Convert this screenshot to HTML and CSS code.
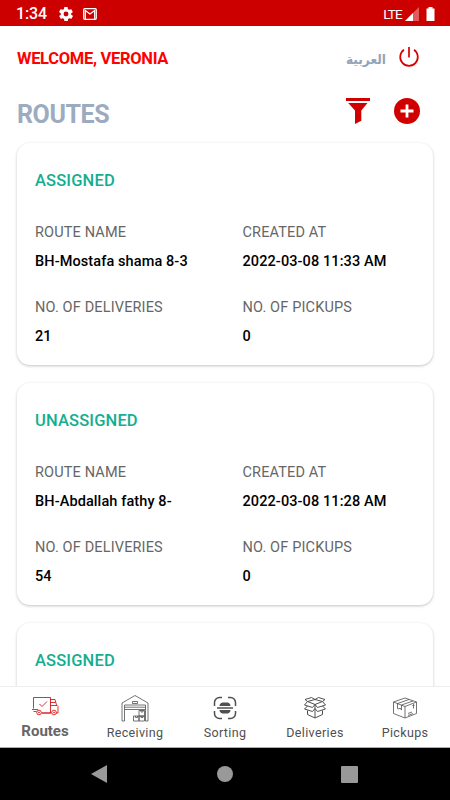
FILE: index.html
```html
<!DOCTYPE html>
<html lang="en">
<head>
    <meta charset="UTF-8">
    <meta name="viewport" content="width=device-width, initial-scale=1.0">
    <title>Routes</title>
    <link rel="stylesheet" href="styles.css">
</head>
<body>
    <div class="status-bar">
        <span class="clock">1:34</span>
        <svg class="status-gear" width="14" height="14" viewBox="2 2 20 20"><path fill="#fff" d="M19.4 13a7.500 7.500 0 0 0 0-2l2.100-1.600a.5.5 0 0 0 .1-.6l-2-3.500a.5.5 0 0 0-.6-.2l-2.500 1a7.300 7.300 0 0 0-1.700-1l-.4-2.600a.5.5 0 0 0-.5-.4h-4a.5.5 0 0 0-.5.4l-.4 2.600a7.300 7.300 0 0 0-1.700 1l-2.500-1a.5.5 0 0 0-.6.2l-2 3.500a.5.5 0 0 0 .1.600L4.600 11a7.500 7.500 0 0 0 0 2l-2.100 1.600a.5.5 0 0 0-.1.600l2 3.500c.1.200.4.300.6.200l2.500-1a7.300 7.300 0 0 0 1.700 1l.4 2.600c0 .2.200.4.500.4h4c.3 0 .5-.2.500-.4l.4-2.600a7.300 7.300 0 0 0 1.700-1l2.500 1c.2.100.5 0 .6-.2l2-3.500a.5.5 0 0 0-.1-.6zM12 15.500a3.500 3.500 0 1 1 0-7 3.500 3.500 0 0 1 0 7z"/></svg>
        <svg width="14" height="12" viewBox="0 0 14 12"><rect x=".7" y=".7" width="12.600" height="10.600" rx="1" fill="none" stroke="#fff" stroke-width="1.200"/><path d="M2.300 11V2.500L7 6l4.700-3.500V11" fill="none" stroke="#fff" stroke-width="1.300"/></svg>
        <span class="lte">LTE</span>
        <svg class="signal" width="14" height="14" viewBox="0 0 14 14"><path d="M14 0v14H0z" fill="#e35c5c"/><path d="M8 6v8H0z" fill="#fff"/></svg>
        <svg width="9" height="14" viewBox="0 0 9 14"><path d="M2.500 0h4v1.500H8.500V14H.5V1.500h2z" fill="#fff"/></svg>
    </div>

    <div class="header">
        <div class="welcome">WELCOME, VERONIA</div>
        <div class="language" lang="ar">العربية</div>
        <svg width="22" height="22" viewBox="0 0 22 22" fill="none" stroke="#d90000" stroke-width="1.700"><path d="M6 3.800a8.800 8.800 0 1 0 10 0M11 1v10.500"/></svg>
    </div>

    <div class="title-row">
        <h1>ROUTES</h1>
        <svg class="filter" width="24" height="26" viewBox="0 0 24 26" fill="#d00000"><path d="M0 0h24v3H0zM2.200 5h19.300L15.300 12.500v10.300L9 26V12.500z"/></svg>
        <svg width="26" height="26" viewBox="0 0 26 26"><circle cx="13" cy="13" r="13" fill="#d00000"/><path d="M13 6.500v13M6.500 13h13" stroke="#fff" stroke-width="2.800"/></svg>
    </div>

    <div class="route-list">
        <div class="card">
            <h2>ASSIGNED</h2>
            <dl>
                <div><dt>ROUTE NAME</dt><dd>BH-Mostafa shama 8-3</dd></div>
                <div><dt>CREATED AT</dt><dd>2022-03-08 11:33 AM</dd></div>
                <div><dt>NO. OF DELIVERIES</dt><dd>21</dd></div>
                <div><dt>NO. OF PICKUPS</dt><dd>0</dd></div>
            </dl>
        </div>
        <div class="card">
            <h2>UNASSIGNED</h2>
            <dl>
                <div><dt>ROUTE NAME</dt><dd>BH-Abdallah fathy 8-</dd></div>
                <div><dt>CREATED AT</dt><dd>2022-03-08 11:28 AM</dd></div>
                <div><dt>NO. OF DELIVERIES</dt><dd>54</dd></div>
                <div><dt>NO. OF PICKUPS</dt><dd>0</dd></div>
            </dl>
        </div>
        <div class="card">
            <h2>ASSIGNED</h2>
        </div>
    </div>

    <div class="tabs">
        <a class="tab active">
            <svg width="28" height="28" viewBox="0 2 28 28"><path d="M2.500 15.500v-11h17v15.500H11M19.500 6.500h4.500l1.500 5.500 1.500 1.500v6.500h-2M19.500 9.500h5M19.500 12.500h6.500M1 16.500h6M2.500 18.500h3M10.500 20h10M8.500 11l2.500 2.500 5-5"/><circle cx="8" cy="19.500" r="2.300"/><circle cx="23" cy="19.500" r="2.300"/><circle cx="8" cy="19.500" r=".5"/><circle cx="23" cy="19.500" r=".5"/></svg>
            <span>Routes</span>
        </a>
        <a class="tab">
            <svg width="28" height="28" viewBox="0 2 28 28"><path d="M1 28V10L14 2.500l13 7.500v18h-2.500V12h-21v16zM3.500 14.200h21M3.500 16.500h21M11.500 8.500h5v2h-5zM18 17.500h5.500V23H18zM12.500 23h5.500v5h-5.500zM18 23h5.500v5H18zM20 17.500v1.500h2v-1.500M14.500 23v1.500h2V23M20 23v1.500h2V23"/></svg>
            <span>Receiving</span>
        </a>
        <a class="tab">
            <svg class="scan" width="28" height="28" viewBox="0 1 28 28"><path d="M3.500 12V8.500a5 5 0 0 1 5-5H11M17 3.500h2.500a5 5 0 0 1 5 5V12M24.500 17v2.500a5 5 0 0 1-5 5H17M11 24.500H8.500a5 5 0 0 1-5-5V17"/><path class="solid" d="M8.500 12c0-2 1-3 3-3.500h5c2 .5 3 1.500 3 3.500zM8.500 16h11c0 2-1 3-3 3.500h-5c-2-.5-3-1.500-3-3.500zM6 13.200h16v1.600H6z"/></svg>
            <span>Sorting</span>
        </a>
        <a class="tab">
            <svg class="open-box" width="28" height="28" viewBox="0 1.500 28 28"><path d="M14 11 6.500 8 3.500 11.500l8 2.500L14 11l2.500 3 8-2.500L21.500 8zM6.500 8 14 6l7.500 2M6.500 8l-2.500-2 6.500-2L14 6l3.500-2L24 6l-2.500 2M6.500 17v4l7.500 3.500 7.500-3.500v-4M14 11v13.500M6.500 12.500l-3 3 8 2.500 2.500-3 2.500 3 8-2.500-3-3"/></svg>
            <span>Deliveries</span>
        </a>
        <a class="tab">
            <svg width="28" height="28" viewBox="0 1.500 28 28"><path d="M2.500 8.500 14 4.500l11.500 4V20L14 24.500 2.500 20zM2.500 8.500 14 13l11.500-4.500M14 13v11.500M6.500 10 18 6M10.500 11.500 22 7.500M6.500 10v5l1.500.5 1-1 1.500 2v-5M22.500 15v-4l-1 1.500M22.500 11l1 .8M17 20l4-1.500M17 22l5-2"/></svg>
            <span>Pickups</span>
        </a>
    </div>

    <div class="system-nav">
        <svg width="17" height="18" viewBox="0 0 17 18"><path d="M16 0v18L0 9z"/></svg>
        <svg width="16" height="16" viewBox="0 0 16 16"><circle cx="8" cy="8" r="8"/></svg>
        <svg width="17" height="17" viewBox="0 0 17 17"><rect width="17" height="17" rx="1"/></svg>
    </div>
</body>
</html>
```
FILE: styles.css
```css
* {
    box-sizing: border-box;
}
body {
    margin: 0;
    height: 800px;
    display: flex;
    flex-direction: column;
    overflow: hidden;
    background-color: #fff;
    font-family: Roboto, sans-serif;
    white-space: nowrap;
}
svg {
    display: block;
    flex: none;
}
.status-bar {
    height: 26px;
    flex: none;
    display: flex;
    align-items: center;
    padding: 1px 15px 0 16px;
    background-color: #cd0000;
    color: #fff;
}
.clock {
    width: 43px;
    font-size: 16px;
    font-weight: 500;
    letter-spacing: -0.1px;
}
.status-gear {
    margin-right: 10px;
}
.lte {
    margin-left: auto;
    font-size: 13.5px;
    letter-spacing: -0.8px;
}
.signal {
    margin: 0 7px 0 3px;
}
.header {
    height: 62px;
    flex: none;
    display: flex;
    align-items: center;
    padding: 0 30px 0 17px;
}
.welcome {
    margin-top: 3px;
    color: #ff0000;
    font-size: 16.5px;
    font-weight: 700;
    letter-spacing: -0.3px;
}
.language {
    margin: 4px 12px 0 auto;
    color: #94a3b8;
    font-family: "DejaVu Sans Condensed", "DejaVu Sans", sans-serif;
    font-size: 13.5px;
    font-stretch: condensed;
    font-weight: 700;
}
.title-row {
    height: 46px;
    flex: none;
    display: flex;
    align-items: center;
    padding-left: 17px;
    padding-right: 30px;
}
h1 {
    margin: 6px 0 0;
    color: #9dabc0;
    font-size: 25px;
    font-weight: 700;
    letter-spacing: -0.4px;
}
.filter {
    margin: 0 24px 0 auto;
}
.route-list {
    flex: 1;
    min-height: 0;
    overflow: hidden;
    padding: 9px 17px 0;
}
.card {
    height: 222px;
    margin-bottom: 18px;
    padding: 26px 18px 0;
    border-radius: 13px;
    background-color: #fff;
    box-shadow: 0 1px 3px rgba(0,0,0,0.24);
}
h2 {
    margin: 0 0 32px;
    color: #14ae91;
    font-size: 16.5px;
    line-height: 23px;
    font-weight: 500;
    letter-spacing: 0.15px;
}
dl {
    margin: 0;
    display: grid;
    grid-template-columns: 207.5px 1fr;
    row-gap: 17px;
}
dt {
    color: #666;
    font-size: 14.5px;
    line-height: 18px;
    letter-spacing: 0.15px;
}
dd {
    margin: 11px 0 0;
    color: #000;
    font-size: 14.5px;
    line-height: 18px;
    font-weight: 500;
    letter-spacing: 0.1px;
    height: 29px;
}
.tabs {
    height: 62px;
    flex: none;
    display: grid;
    grid-template-columns: repeat(5, 1fr);
    padding-top: 8px;
    border-top: 1px solid #eee;
    border-bottom: 1px solid #aaa;
    background-color: #fff;
}
.tab {
    display: flex;
    flex-direction: column;
    align-items: center;
    color: #505050;
    font-size: 12.5px;
    line-height: 19px;
    letter-spacing: 0.35px;
}
.tab svg {
    fill: none;
    stroke: #505050;
    stroke-width: 0.8;
    stroke-linejoin: round;
}
.tab.active {
    color: #666;
    font-size: 15px;
    line-height: 17px;
    font-weight: 700;
    letter-spacing: 0;
}
.active svg {
    stroke: #d00000;
}
.tab .scan {
    stroke-width: 1.5;
}
.tab .open-box {
    stroke-width: 1;
}
.scan .solid {
    fill: #505050;
    stroke: none;
}
.system-nav {
    height: 52px;
    flex: none;
    display: flex;
    align-items: center;
    justify-content: space-between;
    padding: 0 92px 0 91px;
    background-color: #000;
    fill: #999;
}
```
